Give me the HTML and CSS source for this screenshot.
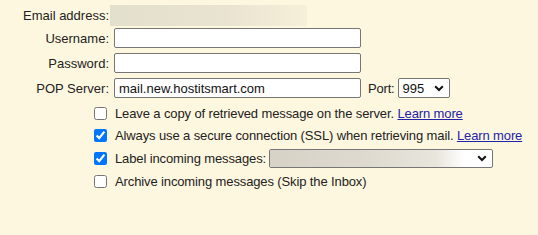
FILE: index.html
```html
<!DOCTYPE html>
<html lang="en">
<head>
    <meta charset="UTF-8">
    <title>Mail account settings</title>
    <link rel="stylesheet" href="styles.css">
</head>
<body>
    <div class="account-form">
        <div class="account-form__row account-form__row--email">
            <span class="account-form__label">Email address:</span>
            <span class="account-form__blur"></span>
        </div>
        <div class="account-form__row">
            <label class="account-form__label" for="username">Username:</label>
            <input class="account-form__input" id="username" type="text">
        </div>
        <div class="account-form__row">
            <label class="account-form__label" for="password">Password:</label>
            <input class="account-form__input" id="password" type="password">
        </div>
        <div class="account-form__row">
            <label class="account-form__label" for="server">POP Server:</label>
            <input class="account-form__input" id="server" type="text" value="mail.new.hostitsmart.com">
            <label class="account-form__port-label" for="port">Port:</label>
            <div class="account-form__select account-form__select--port" id="port">
                <span class="account-form__select-text">995</span>
                <svg class="account-form__chevron" width="10" height="7" viewBox="0 0 10 7"><path d="M1.2 1.3 L5 5 L8.8 1.3" fill="none" stroke="#111" stroke-width="2"/></svg>
            </div>
        </div>
    </div>

    <div class="account-options">
        <label class="account-options__item">
            <input class="account-options__check" type="checkbox">
            <span>Leave a copy of retrieved message on the server. <a href="#" class="account-options__link">Learn more</a></span>
        </label>
        <label class="account-options__item">
            <input class="account-options__check" type="checkbox" checked>
            <span>Always use a secure connection (SSL) when retrieving mail. <a href="#" class="account-options__link">Learn more</a></span>
        </label>
        <label class="account-options__item account-options__item--select">
            <input class="account-options__check" type="checkbox" checked>
            <span>Label incoming messages:</span>
            <div class="account-form__select account-form__select--label">
                <span class="account-form__select-blur"></span>
                <svg class="account-form__chevron" width="10" height="7" viewBox="0 0 10 7"><path d="M1.2 1.3 L5 5 L8.8 1.3" fill="none" stroke="#111" stroke-width="2"/></svg>
            </div>
        </label>
        <label class="account-options__item">
            <input class="account-options__check" type="checkbox">
            <span>Archive incoming messages (Skip the Inbox)</span>
        </label>
    </div>
</body>
</html>
```

FILE: styles.css
```css
body {
    margin: 0;
    background: #fef7df;
    color: #222;
    font-family: "Liberation Sans", Arial, sans-serif;
    font-size: 13px;
}

.account-form {
    display: flex;
    flex-direction: column;
    gap: 5px;
    padding-top: 5px;
}

.account-form__row {
    display: flex;
    align-items: center;
    height: 20px;
}

.account-form__row--email {
    height: 21px;
    margin-bottom: -3px;
}

.account-form__label {
    width: 109px;
    text-align: right;
    flex-shrink: 0;
}

.account-form__blur {
    width: 197px;
    height: 21px;
    margin-left: 1px;
    background: linear-gradient(to right, #e3dfcd, #e9e4d1 60%, #f6efd9);
}

.account-form__input {
    box-sizing: border-box;
    width: 247px;
    height: 20px;
    margin: 0 0 0 5px;
    padding: 0 4px;
    border: 1px solid #767676;
    border-radius: 2px;
    background: #fff;
    font: inherit;
    color: #111;
}

.account-form__port-label {
    margin-left: 7px;
    margin-right: 4px;
    letter-spacing: -0.2px;
}

.account-form__select {
    box-sizing: border-box;
    display: flex;
    align-items: center;
    border: 1px solid #767676;
    border-radius: 2px;
    background: #fff;
    color: #111;
}

.account-form__select--port {
    width: 52px;
    height: 20px;
    padding-left: 3px;
}

.account-form__select-text {
    flex: 1;
}

.account-form__chevron {
    margin-right: 5px;
}

.account-form__select--label {
    width: 224px;
    height: 19px;
    margin-left: 3px;
}

.account-form__select-blur {
    flex: 1;
    align-self: stretch;
    margin-right: 12px;
    background: linear-gradient(to right, #d6d2c6, #dedad0 50%, #e8e5dc 85%, #fff);
}

.account-options {
    display: flex;
    flex-direction: column;
    padding: 4px 0 0 94px;
    letter-spacing: -0.12px;
}

.account-options__item {
    display: flex;
    align-items: center;
    height: 22px;
}

.account-options__item--select {
    height: 24px;
}

.account-options__check {
    width: 13px;
    height: 13px;
    margin: 0 8px 0 0;
    flex-shrink: 0;
}

.account-options__link {
    color: #2323a8;
}
```
